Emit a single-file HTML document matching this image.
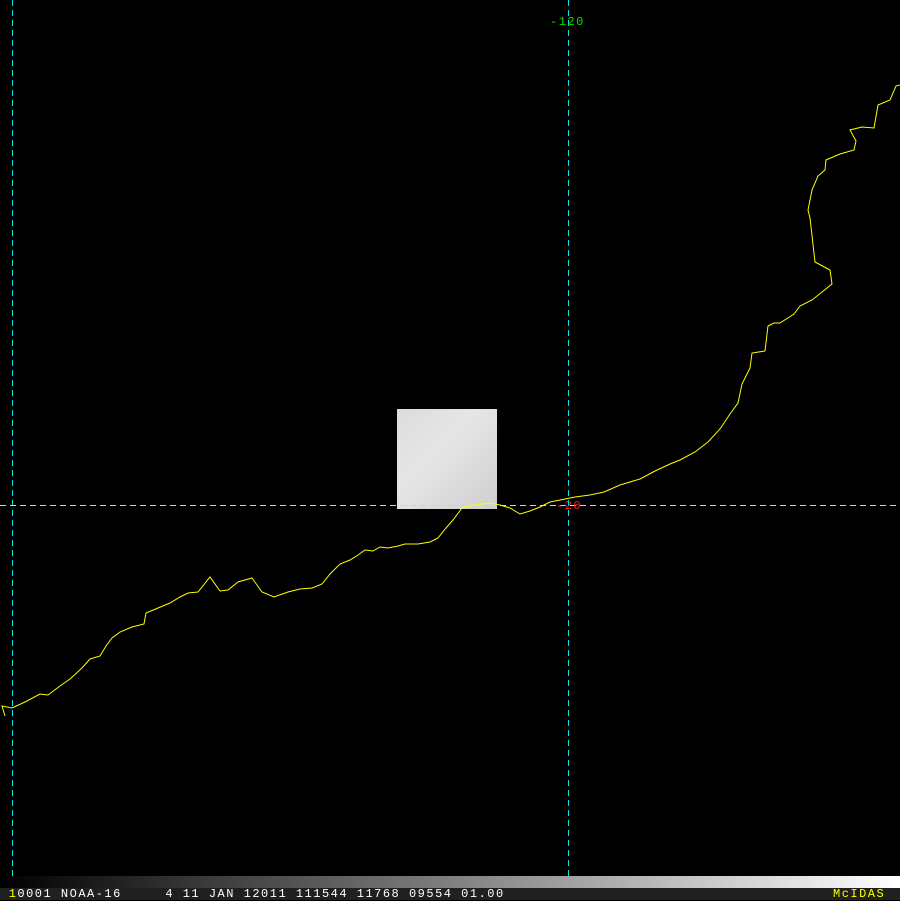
<!DOCTYPE html>
<html><head><style>
body{margin:0;background:#000;width:900px;height:900px;overflow:hidden;position:relative;font-family:"Liberation Mono",monospace}
.bar{position:absolute;left:0;top:876px;width:900px;height:12px;background:linear-gradient(to right,#000,#fff)}
.txt{position:absolute;left:0;top:888px;width:900px;height:12px;background:#202020;color:#fff;font-size:12px;line-height:12px;white-space:pre;letter-spacing:1.5px}
</style></head><body>
<svg width="900" height="900" style="position:absolute;left:0;top:0">
<defs><linearGradient id="g" x1="0" y1="0" x2="1" y2="1"><stop offset="0" stop-color="#dcdcdc"/><stop offset=".4" stop-color="#e6e6e6"/><stop offset="1" stop-color="#cfcfcf"/></linearGradient></defs>
<rect x="397" y="409" width="100" height="100" fill="url(#g)"/>
<line x1="12.5" y1="0" x2="12.5" y2="876" stroke="#00e5e5" stroke-dasharray="6,4"/>
<line x1="568.5" y1="0" x2="568.5" y2="882" stroke="#00e5e5" stroke-dasharray="6,4"/>
<line x1="0" y1="505.5" x2="900" y2="505.5" stroke="#bcdcdc" stroke-dasharray="6,4"/>
<polyline fill="none" stroke="#ffff00" stroke-width="1" points="5,716 2,706 12,708 25,702 40,694 48,695 60,686 70,679 82,668 90,659 100,656 106,646 112,638 120,632 132,627 144,624 146,613 158,608 170,603 180,597 188,593 198,592 210,577 220,591 228,590 238,582 252,578 262,592 274,597 288,592 300,589 312,588 322,584 330,574 340,564 350,560 358,555 365,550 373,551 380,547 388,548 398,546 405,544 418,544 430,542 438,538 446,528 453,520 462,508 470,506 482,504 490,503 500,505 510,508 520,514 530,511 540,507 550,502 560,500 575,497 590,495 604,492 620,485 640,479 655,471 670,464 680,460 695,452 708,442 720,429 730,414 738,403 742,384 750,368 752,353 765,351 768,326 774,323 780,323 794,314 800,306 812,300 822,292 832,284 830,270 815,262 810,218 808,210 812,190 818,176 825,170 826,160 840,154 854,150 856,141 850,130 862,127 874,128 878,105 890,100 896,86 900,85"/>
<text x="550" y="25" fill="#00e000" font-family="Liberation Mono,monospace" font-size="12" letter-spacing="1.5">-120</text>
<text x="556" y="509" fill="#ff2020" font-family="Liberation Mono,monospace" font-size="12" letter-spacing="1.5">-20</text>
</svg>
<div class="bar"></div>
<div class="txt"><span style="color:#ff0"> 1</span>0001 NOAA-16     4 11 JAN 12011 111544 11768 09554 01.00<span style="position:absolute;left:833px;color:#ff0">McIDAS</span></div>
</body></html>
